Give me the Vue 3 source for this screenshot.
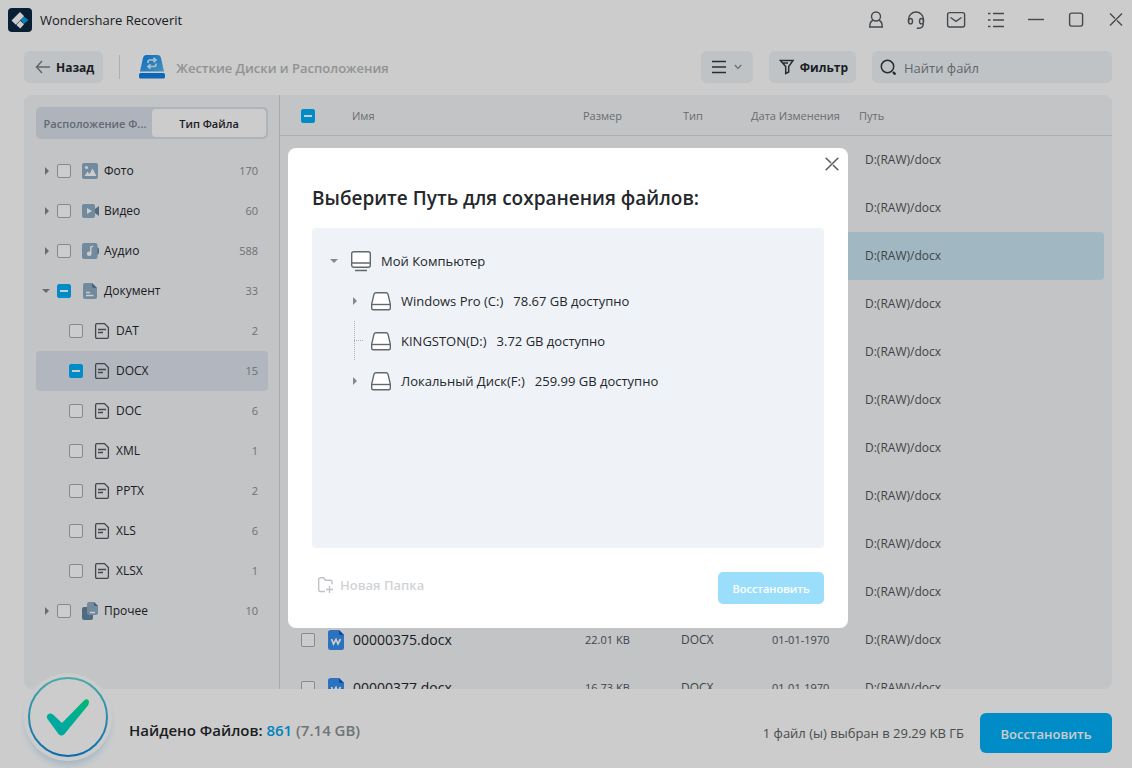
<script setup>
const types = [
  { name: 'Фото', count: 170, icon: 'photo', arrow: 'right' },
  { name: 'Видео', count: 60, icon: 'video', arrow: 'right' },
  { name: 'Аудио', count: 588, icon: 'audio', arrow: 'right' },
  { name: 'Документ', count: 33, icon: 'doc', arrow: 'down', partial: true },
  { name: 'DAT', count: 2, icon: 'page', child: true },
  { name: 'DOCX', count: 15, icon: 'page', child: true, partial: true, selected: true },
  { name: 'DOC', count: 6, icon: 'page', child: true },
  { name: 'XML', count: 1, icon: 'page', child: true },
  { name: 'PPTX', count: 2, icon: 'page', child: true },
  { name: 'XLS', count: 6, icon: 'page', child: true },
  { name: 'XLSX', count: 1, icon: 'page', child: true },
  { name: 'Прочее', count: 10, icon: 'other', arrow: 'right' },
]

const files = [
  ...Array.from({ length: 10 }, (_, i) => ({ path: 'D:(RAW)/docx', active: i === 2 })),
  { name: '00000375.docx', size: '22.01 KB', type: 'DOCX', date: '01-01-1970', path: 'D:(RAW)/docx' },
  { name: '00000377.docx', size: '16.73 KB', type: 'DOCX', date: '01-01-1970', path: 'D:(RAW)/docx' },
]

const drives = [
  { name: 'Windows Pro (C:)', free: '78.67 GB доступно', arrow: true },
  { name: 'KINGSTON(D:)', free: '3.72 GB доступно', arrow: false },
  { name: 'Локальный Диск(F:)', free: '259.99 GB доступно', arrow: true },
]
</script>

<template>
  <div class="app">
    <header class="titlebar">
      <svg class="logo" viewBox="0 0 24 24" aria-hidden="true">
        <rect width="24" height="24" rx="4" fill="#0a2742" />
        <path d="M3.5 12.5 12 4l4.200 4.200-8.400 8.500z" fill="#fff" />
        <path d="M12.500 11.800 15.800 8.500 20.500 12l-4.700 4z" fill="#0f9fe6" />
        <path d="m12.200 12.800 3.800 3.500-3.700 4.200-4-3.600z" fill="#fff" />
      </svg>
      <span class="app-name">Wondershare Recoverit</span>
      <nav class="window-actions">
        <button type="button" aria-label="Аккаунт">
          <svg viewBox="0 0 24 24"><circle cx="12" cy="8.500" r="4.500" /><path d="M9.200 12c-2.500 1.200-3.500 3.500-3.500 7h12.600c0-3.500-1-5.800-3.500-7" /></svg>
        </button>
        <button type="button" aria-label="Поддержка">
          <svg viewBox="0 0 24 24"><path d="M4.500 14V11.500a7.500 7.500 0 0 1 15 0V14M19.300 15.500c0 3-2 4.700-4.600 4.700h-1.900" /><ellipse cx="6.500" cy="13.200" rx="2" ry="2.700" /><ellipse cx="17.500" cy="13.200" rx="2" ry="2.700" /></svg>
        </button>
        <button type="button" aria-label="Почта">
          <svg viewBox="0 0 24 24"><rect x="3.600" y="4.600" width="17" height="14.400" rx="2" /><path d="m6.500 9.500 5.500 3.800 5.500-3.800" /></svg>
        </button>
        <button type="button" aria-label="Меню">
          <svg viewBox="0 0 24 24"><path d="M9 5.500h11M9 12h11M9 18.500h11" /><path d="M4 5.500h2.500M4 12h2.500M4 18.500h2.500" /></svg>
        </button>
        <button type="button" aria-label="Свернуть">
          <svg viewBox="0 0 24 24"><path d="M4 11.500h16" /></svg>
        </button>
        <button type="button" aria-label="Развернуть">
          <svg viewBox="0 0 24 24"><rect x="5.600" y="5.100" width="13" height="13" rx="2" /></svg>
        </button>
        <button type="button" aria-label="Закрыть">
          <svg viewBox="0 0 24 24"><path d="m6 5.500 5 5M18 17.500l-5-5M18 5.500 6 17.500" /></svg>
        </button>
      </nav>
    </header>

    <div class="toolbar">
      <button type="button" class="tool back">
        <svg viewBox="0 0 16 16" aria-hidden="true"><path d="M15 8H2M7 2 1.500 8 7 14" /></svg>
        <span>Назад</span>
      </button>
      <span class="separator"></span>
      <svg class="disk" viewBox="0 0 26 24" aria-hidden="true">
        <defs>
          <linearGradient id="disk-fill" x1="0" y1="0" x2="1" y2="1">
            <stop offset="0" stop-color="#0c86f0" /><stop offset="1" stop-color="#58b8ee" />
          </linearGradient>
        </defs>
        <path d="M4 3Q4.600 0 7.500 0h11q2.900 0 3.500 3L25 16.500H1z" fill="url(#disk-fill)" />
        <rect y="18" width="26" height="5.500" rx="1.500" fill="#1180e4" />
        <path d="M9 8V7q0-2 2-2h5.500M14.500 2.800 17 5l-2.500 2.200M17 8.500v1q0 2-2 2H9.500M11.500 9.300 9 11.500l2.500 2.200" fill="none" stroke="#d8effc" stroke-width="1.700" />
      </svg>
      <span class="crumb">Жесткие Диски и Расположения</span>
      <button type="button" class="tool view" aria-label="Вид">
        <svg class="bars" viewBox="0 0 14 14" aria-hidden="true"><path d="M0 1.500h14M0 7h14M0 12.500h14" /></svg>
        <svg class="chevron" viewBox="0 0 8 6" aria-hidden="true"><path d="m.800 1 3.200 3.500L7.200 1" /></svg>
      </button>
      <button type="button" class="tool filter">
        <svg viewBox="0 0 16 16" aria-hidden="true"><path d="M1.500 1.500h12.500L9.700 7.500V13l-3 1.500v-7zM4 4h5" /></svg>
        <span>Фильтр</span>
      </button>
      <label class="search">
        <svg viewBox="0 0 16 16" aria-hidden="true"><circle cx="7.500" cy="7.500" r="6.200" /><path d="m13 13 2.500 2.500" stroke-width="2.400" /></svg>
        <input type="text" placeholder="Найти файл" aria-label="Найти файл" />
      </label>
    </div>

    <main class="content">
      <aside class="sidebar">
        <div class="tabs">
          <button type="button">Расположение Ф...</button>
          <button type="button" class="on">Тип Файла</button>
        </div>
        <ul class="types">
          <li v-for="t in types" :key="t.name" :class="{ child: t.child, selected: t.selected }">
            <span v-if="!t.child" class="arrow" :class="t.arrow"></span>
            <label>
              <input type="checkbox" class="check" :indeterminate="t.partial" />
              <svg class="type-icon" viewBox="0 0 18 18" aria-hidden="true">
                <template v-if="t.icon === 'photo'">
                  <rect x="1" y="1" width="16" height="16" rx="2" fill="#8fadc6" />
                  <circle cx="5.500" cy="5.500" r="1.600" fill="#fff" />
                  <path d="M3.500 14 6.500 9.500 8.500 12 11.500 6.500 15.500 14z" fill="#fff" />
                </template>
                <template v-else-if="t.icon === 'video'">
                  <path d="m14 7 4-3v10l-4-3z" fill="#6286a0" />
                  <rect x="1" y="2" width="13" height="14" rx="2" fill="#8fadc6" />
                  <path d="m6 6 5 3-5 3z" fill="#fff" />
                </template>
                <template v-else-if="t.icon === 'audio'">
                  <circle cx="14" cy="9" r="4.500" fill="#6286a0" />
                  <rect x="1" y="1" width="15.500" height="16" rx="2" fill="#8fadc6" />
                  <circle cx="8.200" cy="11.800" r="2.300" fill="#fff" />
                  <path d="M9.800 11.800V5l2.400-.800" fill="none" stroke="#fff" stroke-width="1.400" />
                </template>
                <template v-else-if="t.icon === 'doc'">
                  <path d="M2 3q0-2 2-2h7l5 5v9q0 2-2 2H4q-2 0-2-2z" fill="#8fadc6" />
                  <path d="m11 1 5 5h-3q-2 0-2-2z" fill="#567b97" />
                  <path d="M5 10.500h4M5 13.500h7.500" fill="none" stroke="#fff" stroke-width="1.400" />
                </template>
                <template v-else-if="t.icon === 'other'">
                  <rect x="1" y="5" width="11" height="13" rx="2" fill="#6286a0" />
                  <path d="M6 2q0-2 2-2h5l4 4v7q0 2-2 2H8q-2 0-2-2z" fill="#8fadc6" />
                  <path d="m13 0 4 4h-2.500Q13 4 13 2.500z" fill="#567b97" />
                  <path d="M9 10.500h5" stroke="#fff" stroke-width="1.400" />
                </template>
                <template v-else>
                  <path d="M2.600 3q0-1.400 1.400-1.400h7.500l3.900 4V15q0 1.400-1.400 1.400H4q-1.400 0-1.400-1.400z" fill="none" stroke="#53595f" stroke-width="1.300" />
                  <path d="M5 7.500h8M5 10.500h5" stroke="#53595f" stroke-width="1.300" />
                </template>
              </svg>
              <span>{{ t.name }}</span>
            </label>
            <span class="count">{{ t.count }}</span>
          </li>
        </ul>
      </aside>

      <section class="list">
        <table>
          <colgroup>
            <col class="c-check" /><col class="c-name" /><col class="c-size" /><col class="c-type" /><col class="c-date" /><col />
          </colgroup>
          <thead>
            <tr>
              <th class="pick"><input type="checkbox" class="check" indeterminate aria-label="Выбрать все" /></th>
              <th>Имя</th>
              <th>Размер</th>
              <th class="kind">Тип</th>
              <th class="date">Дата Изменения</th>
              <th class="path">Путь</th>
            </tr>
          </thead>
          <tbody>
            <tr v-for="(f, i) in files" :key="i" :class="{ active: f.active }">
              <td class="pick"><input type="checkbox" class="check" aria-label="Выбрать файл" /></td>
              <td>
                <span v-if="f.name" class="file">
                  <svg viewBox="0 0 16 20" aria-hidden="true">
                    <path d="M0 2.500Q0 0 2.500 0H11l5 5v12.500q0 2.500-2.500 2.500h-11Q0 20 0 17.500z" fill="#3690ee" />
                    <path d="m11 0 5 5h-3.500Q11 5 11 3.500z" fill="#135cc4" />
                    <path d="m3.500 9 2 5L8 9.500l2 4.500 2.500-5" fill="none" stroke="#fff" stroke-width="1.700" />
                  </svg>
                  <span>{{ f.name }}</span>
                </span>
              </td>
              <td class="size">{{ f.size }}</td>
              <td>{{ f.type }}</td>
              <td class="date">{{ f.date }}</td>
              <td class="path">{{ f.path }}</td>
            </tr>
          </tbody>
        </table>
      </section>
    </main>

    <footer class="status">
      <svg class="done" viewBox="0 0 88 88" aria-hidden="true">
        <defs>
          <linearGradient id="ring" x1="0" y1="0" x2="0" y2="1">
            <stop offset="0" stop-color="#5cd6d3" /><stop offset="1" stop-color="#0a86dc" />
          </linearGradient>
          <linearGradient id="tick" x1="0" y1="1" x2="1" y2="0">
            <stop offset="0" stop-color="#00cfd2" /><stop offset=".5" stop-color="#00d8bd" /><stop offset="1" stop-color="#00e68c" />
          </linearGradient>
        </defs>
        <circle cx="44" cy="44" r="44" fill="#fff" />
        <circle cx="44" cy="44" r="39" fill="none" stroke="url(#ring)" stroke-width="2" />
        <path d="M23.500 46q-2-3.500 1.500-5.300 2.500-1 4.500 1.300l8.500 8L60 27.500q2.500-2.200 4.500-.200 1.500 2-.200 4.700L40.500 61q-3.300 3-6 0z" fill="url(#tick)" />
      </svg>
      <p class="found">Найдено Файлов: <b>861</b> <span>(7.14 GB)</span></p>
      <p class="chosen">1 файл (ы) выбран в 29.29 KB ГБ</p>
      <button type="button" class="recover">Восстановить</button>
    </footer>

    <div class="backdrop">
      <div class="dialog" role="dialog" aria-modal="true" aria-labelledby="dialog-title">
        <button type="button" class="close" aria-label="Закрыть окно">
          <svg viewBox="0 0 24 24"><path d="m5.700 5.700 5.300 5.300M18.300 18.300 13 13M18.300 5.700 5.700 18.300" /></svg>
        </button>
        <h2 id="dialog-title">Выберите Путь для сохранения файлов:</h2>
        <ul class="tree">
          <li>
            <span class="twist"><span class="arrow down"></span></span>
            <svg class="drive" viewBox="0 0 20 22" aria-hidden="true">
              <rect x=".7" y="1.700" width="18.600" height="15.600" rx="2" fill="#fff" />
              <path d="M.7 13h18.600M4 20.500h12" />
            </svg>
            <span>Мой Компьютер</span>
          </li>
          <li v-for="d in drives" :key="d.name" class="leaf">
            <span class="twist" :class="{ dotted: !d.arrow }"><span v-if="d.arrow" class="arrow right"></span></span>
            <svg class="drive" viewBox="0 0 20 22" aria-hidden="true">
              <path d="M3 4.200Q3.500 2.700 5 2.700h10q1.500 0 2 1.500l2.300 10v4q0 1.500-1.500 1.500H2.200q-1.500 0-1.500-1.500v-4z" fill="#fff" />
              <path d="M1 14.500h18" />
            </svg>
            <span>{{ d.name }}</span>
            <span class="free">{{ d.free }}</span>
          </li>
        </ul>
        <div class="dialog-actions">
          <button type="button" class="new-folder">
            <svg viewBox="0 0 16 18" aria-hidden="true"><path d="M7.500 15.500H3q-1.800 0-1.800-1.800V3.500Q1.200 1.700 3 1.700h3l2 2.500h5q1.500 0 1.500 1.500v2.500M12 10v7M8.500 13.500h7" /></svg>
            <span>Новая Папка</span>
          </button>
          <button type="button" class="save" disabled>Восстановить</button>
        </div>
      </div>
    </div>
  </div>
</template>

<style>
body {
  margin: 0;
  background: #fff;
}
</style>

<style scoped>
* {
  box-sizing: border-box;
}
button,
input {
  font: inherit;
  color: inherit;
  border: 0;
  padding: 0;
  margin: 0;
  background: none;
}
ul,
p,
h2 {
  margin: 0;
  padding: 0;
  list-style: none;
}
svg {
  display: block;
  flex: none;
}
.app {
  height: 100vh;
  display: flex;
  flex-direction: column;
  font-family: 'Open Sans', 'Noto Sans', sans-serif;
  font-size: 12px;
  line-height: 16px;
  color: #24272b;
  background: #fff;
}
.titlebar {
  height: 39px;
  flex: none;
  display: flex;
  align-items: center;
  padding: 0 4px 0 8px;
}
.logo {
  width: 24px;
  height: 24px;
}
.app-name {
  margin-left: 8px;
  font-size: 13px;
}
.window-actions {
  margin-left: auto;
  display: flex;
  gap: 16px;
}
.window-actions svg {
  width: 24px;
  height: 24px;
  fill: none;
  stroke: #565c61;
  stroke-width: 1.4;
}
.toolbar {
  flex: none;
  display: flex;
  align-items: center;
  padding: 12px 20px 12px 24px;
}
.tool {
  height: 32px;
  display: flex;
  align-items: center;
  border-radius: 6px;
  background: #eff4f8;
  font-weight: 700;
}
.tool span,
.crumb {
  padding-top: 2px;
}
.tool svg {
  width: 16px;
  height: 16px;
  fill: none;
  stroke: #33383c;
  stroke-width: 1.5;
}
.back {
  padding: 0 9px 0 11px;
  gap: 5px;
}
.back svg {
  stroke: #7b8085;
}
.separator {
  width: 1px;
  height: 24px;
  margin: 0 19px 0 16px;
  background: #d9dcde;
}
.disk {
  width: 26px;
  height: 24px;
}
.crumb {
  margin: 0 auto 0 11px;
  font-size: 13px;
  font-weight: 600;
  color: #b4b8ba;
}
.view {
  width: 52px;
  gap: 8px;
  padding: 0 11px;
}
.view .bars {
  width: 14px;
  height: 14px;
}
.view .chevron {
  width: 8px;
  height: 6px;
  stroke: #8d9397;
}
.filter {
  margin: 0 16px;
  padding: 0 8px 0 10px;
  gap: 5px;
}
.search {
  width: 240px;
  height: 32px;
  display: flex;
  align-items: center;
  gap: 8px;
  padding: 0 8px;
  border-radius: 6px;
  background: #eff4f8;
}
.search svg {
  width: 16px;
  height: 16px;
  fill: none;
  stroke: #33383c;
  stroke-width: 1.5;
}
.search input {
  flex: 1;
  min-width: 0;
  padding-top: 2px;
  font-size: 13px;
  outline: 0;
}
.search input::placeholder {
  color: #7b8084;
  opacity: 1;
}
.content {
  flex: 1;
  min-height: 0;
  display: flex;
  margin: 0 20px 0 24px;
  border-radius: 8px;
  background: #f4f5f8;
  overflow: hidden;
}
.sidebar {
  flex: none;
  width: 256px;
  padding: 12px 11px 0 12px;
  border-right: 1px solid #d3d5d9;
}
.tabs {
  height: 32px;
  display: grid;
  grid-template-columns: 1fr 1fr;
  padding: 2px;
  border-radius: 5px;
  background: #dae0ec;
  color: #7c8391;
}
.tabs button {
  padding-top: 2px;
  border-radius: 4px;
  white-space: nowrap;
  font-weight: 600;
  font-size: 11px;
}
.tabs .on {
  background: #fff;
  color: #24272b;
}
.types {
  margin-top: 12px;
}
.types li {
  height: 40px;
  display: flex;
  align-items: center;
  padding: 0 10px 0 6px;
  border-radius: 4px;
}
.types .child {
  padding-left: 33px;
}
.types .selected {
  background: #dee4ef;
}
.types label {
  display: flex;
  align-items: center;
}
.type-icon {
  width: 18px;
  height: 18px;
  margin: 0 5px 0 10px;
}
.count {
  margin-left: auto;
  font-size: 11px;
  color: #8a8e92;
}
.arrow {
  flex: none;
  width: 15px;
  height: 8px;
  background: #85898d;
}
.arrow.right {
  clip-path: polygon(3px 0, 7px 4px, 3px 8px);
}
.arrow.down {
  clip-path: polygon(0 2px, 8px 2px, 4px 6px);
}
.check {
  appearance: none;
  flex: none;
  width: 14px;
  height: 14px;
  display: grid;
  place-items: center;
  border: 1px solid #a9adb1;
  border-radius: 2px;
  background: #fff;
}
.check:indeterminate {
  border-color: #00b1f9;
  background: #00b1f9;
}
.check:indeterminate::after {
  content: '';
  width: 8px;
  height: 2px;
  background: #fff;
}
.list {
  flex: 1;
  min-width: 0;
  overflow: hidden;
}
table {
  width: 100%;
  table-layout: fixed;
  border-collapse: separate;
  border-spacing: 0;
  color: #50555a;
}
th {
  height: 41px;
  padding: 2px 0 0;
  font-weight: 400;
  font-size: 11px;
  text-align: left;
  color: #84898d;
  border-bottom: 1px solid #d8dbe0;
}
td {
  height: 48px;
  padding: 0;
}
.pick {
  padding-left: 21px;
}
.c-check {
  width: 72px;
}
.c-name {
  width: 231px;
}
.c-size {
  width: 98px;
}
.c-type {
  width: 70px;
}
.c-date {
  width: 91px;
}
.kind {
  padding-left: 2px;
}
td.size {
  padding-left: 2px;
  font-size: 11px;
}
.date {
  white-space: nowrap;
}
td.date {
  padding-left: 21px;
  font-size: 11px;
}
th.path {
  padding-left: 17px;
}
td.path {
  padding-left: 23px;
}
.active td {
  background: #cae7f4;
}
.active td.pick {
  padding-left: 13px;
  border-left: 8px solid #f4f5f8;
}
.active td.path {
  border-right: 8px solid #f4f5f8;
  border-radius: 0 12px 12px 0 / 0 4px 4px 0;
}
.file {
  display: flex;
  align-items: center;
  gap: 9px;
  margin-left: -24px;
  font-size: 14px;
  color: #24272b;
}
.file svg {
  width: 16px;
  height: 20px;
}
.status {
  position: relative;
  flex: none;
  display: flex;
  align-items: center;
  padding: 24px 20px 15px 129px;
}
.done {
  position: absolute;
  left: 24px;
  top: -16px;
  width: 88px;
  height: 88px;
  border-radius: 50%;
  box-shadow: 0 6px 8px -3px #c0dff2;
}
.found {
  margin-right: auto;
  padding-bottom: 6px;
  font-size: 15px;
  font-weight: 600;
}
.found b {
  font-weight: 600;
  color: #00a5ec;
}
.found span {
  color: #8d9194;
}
.chosen {
  font-size: 13px;
  color: #5a5f63;
}
.recover {
  width: 132px;
  height: 40px;
  margin-left: 16px;
  padding-top: 2px;
  border-radius: 6px;
  background: #00b1f9;
  color: #fff;
  font-size: 13px;
  font-weight: 600;
}
.backdrop {
  position: fixed;
  inset: 0;
  display: grid;
  place-items: center;
  padding: 8px 0 0 4px;
  background: rgba(0, 0, 0, 0.2);
}
.dialog {
  position: relative;
  width: 560px;
  max-width: 100%;
  padding: 36px 24px 24px;
  border-radius: 8px;
  background: #fff;
}
.close {
  position: absolute;
  top: 4px;
  right: 4px;
}
.close svg {
  width: 24px;
  height: 24px;
  fill: none;
  stroke: #565c61;
  stroke-width: 1.5;
}
h2 {
  font-size: 19px;
  line-height: 28px;
  font-weight: 600;
}
.tree {
  height: 320px;
  margin-top: 16px;
  padding: 13px 18px;
  border-radius: 4px;
  background: #eff3f7;
  font-size: 13px;
}
.tree li {
  height: 40px;
  display: flex;
  align-items: center;
  white-space: nowrap;
}
.twist {
  flex: none;
  width: 21px;
  height: 40px;
  display: flex;
  align-items: center;
}
.leaf .twist {
  width: 17px;
}
.tree .leaf {
  padding-left: 24px;
}
.leaf .arrow.right {
  clip-path: polygon(0 0, 4px 4px, 0 8px);
  margin-left: -1px;
}
.drive {
  width: 20px;
  height: 22px;
  margin-right: 10px;
  fill: none;
  stroke: #63686d;
  stroke-width: 1.4;
}
.dotted {
  background:
    repeating-linear-gradient(180deg, #aeb2b6 0 1px, transparent 1px 2px) 0 0 / 1px 40px no-repeat,
    repeating-linear-gradient(90deg, #aeb2b6 0 1px, transparent 1px 2px) 0 19px / 10px 1px no-repeat;
}
.free {
  margin-left: 10px;
}
.dialog-actions {
  margin-top: 24px;
  display: flex;
  justify-content: space-between;
}
.new-folder {
  display: flex;
  align-items: center;
  gap: 6px;
  height: 26px;
  margin-left: 5px;
  font-size: 13px;
  font-weight: 600;
  color: #d0d3d6;
}
.new-folder svg {
  width: 17px;
  height: 18px;
  fill: none;
  stroke: #bfc3c6;
  stroke-width: 1.4;
}
.save {
  width: 106px;
  height: 32px;
  padding-top: 2px;
  border-radius: 5px;
  background: #9adefc;
  color: #fff;
  font-size: 11px;
  font-weight: 600;
}
</style>
